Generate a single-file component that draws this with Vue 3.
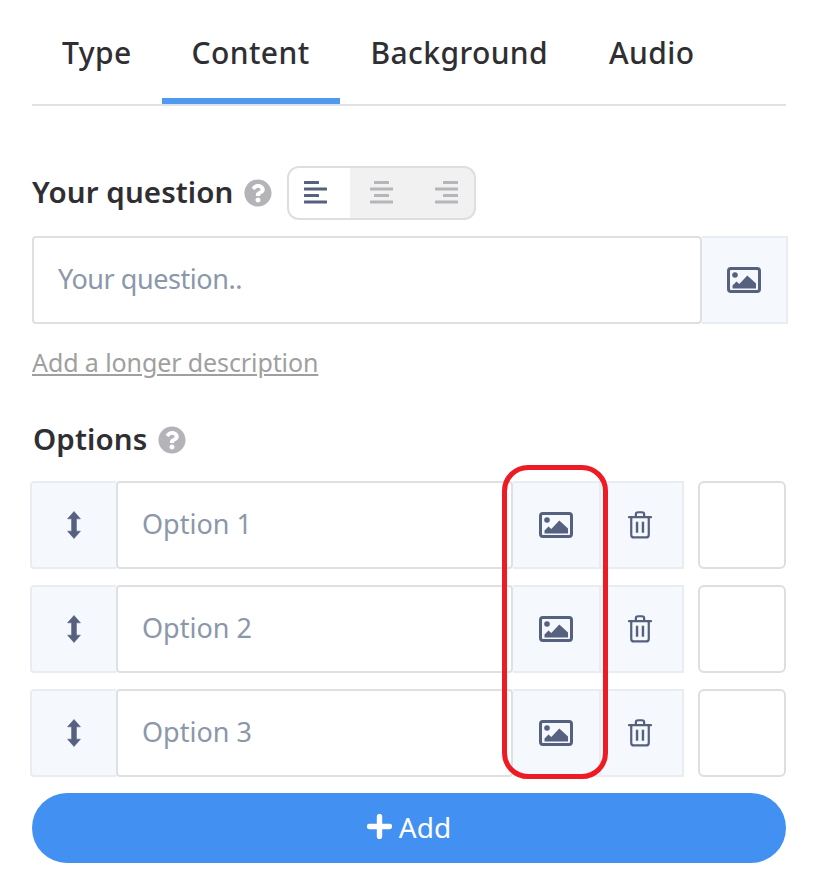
<template>
  <div class="panel">
    <div class="tabs">
      <div v-for="tab in tabs" :key="tab" class="tab" :class="{ active: tab === 'Content' }">{{ tab }}</div>
    </div>

    <div class="label-row">
      <span class="label">Your question</span>
      <svg class="help" viewBox="0 0 512 512"><path :d="helpPath" /></svg>
      <div class="align-group">
        <div v-for="(a, i) in aligns" :key="a" class="align-btn" :class="{ on: i === 0 }">
          <svg width="23" height="24" viewBox="0 0 23 24">
            <rect v-for="(b, j) in alignBars(a)" :key="j" :x="b.x" :y="b.y" :width="b.w" height="3" rx="0.5" />
          </svg>
        </div>
      </div>
    </div>

    <div class="question-row">
      <div class="field q-field">Your question..</div>
      <div class="addon q-image">
        <svg class="pic" viewBox="0 0 34 26"><use href="#pic-icon" /></svg>
      </div>
    </div>

    <a class="describe">Add a longer description</a>

    <div class="label-row options-label">
      <span class="label">Options</span>
      <svg class="help" viewBox="0 0 512 512"><path :d="helpPath" /></svg>
    </div>

    <div class="options">
      <div v-for="n in 3" :key="n" class="option">
        <div class="addon drag">
          <svg width="14" height="28" viewBox="0 0 14 28">
            <path d="M7 0.500 13.400 7.800H9.400V20.200H13.400L7 27.500 0.600 20.200H4.600V7.800H0.600Z" stroke-linejoin="round" stroke="#56607f" stroke-width="0.6" />
          </svg>
        </div>
        <div class="field opt-field">Option {{ n }}</div>
        <div class="addon opt-image">
          <svg class="pic" viewBox="0 0 34 26"><use href="#pic-icon" /></svg>
        </div>
        <div class="addon trash">
          <svg width="24" height="28" viewBox="0 0 26 30" fill="none" stroke="#56607f" stroke-width="2.400">
            <path d="M1 6.500H25" stroke-linecap="round" />
            <path d="M8.500 6V3.600C8.500 2.200 9.600 1.200 11 1.200H15C16.400 1.200 17.500 2.200 17.500 3.600V6" />
            <path d="M3.500 7V25.500C3.500 27.200 4.800 28.500 6.500 28.500H19.500C21.200 28.500 22.500 27.200 22.500 25.500V7" />
            <path d="M9.800 11.500V23.500M16.200 11.500V23.500" stroke-width="2.600" />
          </svg>
        </div>
        <div class="check"></div>
      </div>
      <div class="highlight"></div>
    </div>

    <button class="add-btn">
      <svg width="25" height="25" viewBox="0 0 25 25"><path d="M12.500 2.500V22.500M2.500 12.500H22.500" stroke="#fff" stroke-width="5.400" stroke-linecap="round" /></svg>
      <span>Add</span>
    </button>

    <svg width="0" height="0" class="defs">
      <defs>
        <g id="pic-icon">
          <rect x="1.500" y="1.500" width="31" height="23" rx="2.400" fill="none" stroke="#56607f" stroke-width="3" />
          <circle cx="8" cy="8" r="2.800" fill="#56607f" />
          <path d="M5.500 21.500V18.400L9.500 14.500 12.300 17 20.300 8.400 29 16.600V21.500Z" fill="#56607f" />
        </g>
      </defs>
    </svg>
  </div>
</template>

<script setup>
const tabs = ["Type", "Content", "Background", "Audio"];
const aligns = ["left", "center", "right"];

const helpPath =
  "M504 256c0 137-111 248-248 248S8 393 8 256 119 8 256 8s248 111 248 248zM262.700 90c-54.500 0-89.300 23-116.500 63.800-3.500 5.300-2.400 12.400 2.700 16.300l34.700 26.300c5.200 3.900 12.600 3 16.700-2.100 17.900-22.700 30.100-35.800 57.300-35.800 20.400 0 45.700 13.100 45.700 32.900 0 15-12.400 22.700-32.600 34-23.600 13.200-54.800 29.700-54.800 70.900V300c0 6.600 5.400 12 12 12h56c6.600 0 12-5.400 12-12v-1.300c0-28.500 83.400-29.700 83.400-106.900C379.100 133.600 318.700 90 262.700 90zM256 338c-25.400 0-46 20.600-46 46 0 25.400 20.600 46 46 46s46-20.600 46-46c0-25.400-20.600-46-46-46z";

// short, long, short, long
function alignBars(side) {
  return [15, 23, 15, 23].map((w, j) => {
    let x = 0;
    if (side === "center") x = (23 - w) / 2;
    if (side === "right") x = 23 - w;
    return { x, y: j * 6.5, w };
  });
}
</script>

<style>
body {
  background: #fff;
}
</style>

<style scoped>
.panel {
  width: 817px;
  height: 885px;
  box-sizing: border-box;
  padding: 0 29px 0 32px;
  font-family: "Noto Sans", "Open Sans", sans-serif;
  color: #2f2f33;
  overflow: hidden;
}

.tabs {
  display: flex;
  height: 106px;
  width: 754px;
  box-sizing: border-box;
  border-bottom: 2px solid #e0e1e3;
}

.tab {
  height: 104px;
  box-sizing: border-box;
  padding: 33px 31px 0 30px;
  font-size: 30px;
  line-height: 40px;
  font-weight: 500;
  letter-spacing: 0.4px;
}

.tab:nth-child(1),
.tab:nth-child(2) {
  padding-right: 30px;
}

.tab:nth-child(3) {
  padding-left: 31px;
}

.tab.active {
  border-bottom: 6px solid #4f9af0;
}

.label-row {
  display: flex;
  align-items: center;
  height: 54px;
  margin-top: 60px;
}

.label {
  font-size: 29.5px;
  font-weight: 600;
  line-height: 40px;
  letter-spacing: 0.1px;
  position: relative;
  top: -1px;
}

.help {
  width: 28px;
  height: 28px;
  margin-left: 10px;
  fill: #b4b4b8;
}

.align-group {
  display: flex;
  width: 189px;
  height: 54px;
  box-sizing: border-box;
  margin-left: 15px;
  border: 2px solid #dedede;
  border-radius: 12px;
  overflow: hidden;
  background: #f1f1f1;
}

.align-btn {
  flex: none;
  width: 33.33%;
  box-sizing: border-box;
  display: flex;
  align-items: center;
  justify-content: center;
  fill: #b6b6ba;
}

.align-btn:first-child {
  padding-right: 8px;
}

.align-btn:last-child {
  padding-left: 8px;
}

.align-btn.on {
  background: #fff;
  fill: #56607f;
}

.question-row {
  display: flex;
  margin-top: 16px;
  height: 88px;
  width: 756px;
}

.field {
  display: flex;
  align-items: center;
  box-sizing: border-box;
  border: 2px solid #dfe0e2;
  border-radius: 4px;
  background: #fff;
  color: #8b97aa;
  font-size: 27px;
  padding-left: 24px;
  padding-bottom: 3px;
}

.q-field {
  width: 670px;
  letter-spacing: -0.45px;
}

.addon {
  display: flex;
  align-items: center;
  justify-content: center;
  box-sizing: border-box;
  background: #f5f8fc;
  border: 2px solid #e9edf1;
}

.q-image {
  width: 86px;
  border-left: none;
}

.pic {
  width: 34px;
  height: 26px;
}

.describe {
  display: block;
  margin-top: 20px;
  height: 36px;
  font-size: 25px;
  line-height: 36px;
  color: #9f9f9f;
  text-decoration: underline;
  letter-spacing: -0.1px;
}

.options-label {
  margin-top: 37px;
  height: 46px;
}

.options-label .label {
  margin-left: 1px;
}

.options-label .help {
  margin-left: 11px;
}

.options {
  position: relative;
  margin: 18px 0 0 -2px;
  display: flex;
  flex-direction: column;
  gap: 16px;
}

.option {
  display: flex;
  height: 88px;
}

.drag {
  width: 86px;
  border-right: none;
  border-radius: 4px 0 0 4px;
  fill: #56607f;
}

.opt-field {
  width: 397px;
}

.opt-image {
  width: 86px;
  border-left: none;
  border-right: none;
}

.trash {
  width: 85px;
  padding-right: 3px;
}

.check {
  width: 88px;
  margin-left: 14px;
  box-sizing: border-box;
  border: 2px solid #dedede;
  border-radius: 6px;
  background: #fff;
}

.highlight {
  position: absolute;
  left: 472px;
  top: -16px;
  width: 106px;
  height: 314px;
  box-sizing: border-box;
  border: 5px solid #ed1c24;
  border-radius: 26px;
  pointer-events: none;
}

.add-btn {
  display: flex;
  align-items: center;
  justify-content: center;
  gap: 7px;
  width: 754px;
  height: 70px;
  margin-top: 16px;
  padding: 0 0 3px;
  border: none;
  border-radius: 35px;
  background: #4291f2;
  color: #fff;
  font-family: inherit;
  font-size: 28px;
}

.defs {
  position: absolute;
}
</style>
